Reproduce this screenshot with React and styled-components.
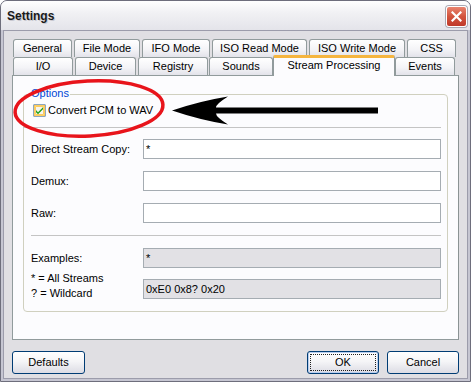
import React from "react";
import styled, { createGlobalStyle } from "styled-components";

const GlobalStyle = createGlobalStyle`
  html, body {
    margin: 0;
    padding: 0;
    background: #ffffff;
  }
  body {
    font-family: "Liberation Sans", Arial, sans-serif;
    font-size: 11px;
    color: #000000;
  }
  * {
    box-sizing: border-box;
  }
`;

const Window = styled.div`
  position: relative;
  width: 471px;
  height: 382px;
  display: flex;
  flex-direction: column;
  border: 1px solid #6e6e7c;
  border-radius: 7px 7px 0 0;
  background: #c6c6d2;
  overflow: hidden;
`;

const TitleBar = styled.div`
  height: 29px;
  flex: none;
  display: flex;
  align-items: center;
  justify-content: space-between;
  padding: 0 3px 0 6px;
  background: linear-gradient(#ffffff, #f1f1f4 40%, #e4e4ea);
`;

const Title = styled.div`
  font-size: 12px;
  font-weight: bold;
  color: #1a1a1a;
  text-shadow: 1px 1px 0 #c8c8d0;
`;

const CloseButton = styled.div`
  width: 21px;
  height: 21px;
  margin-top: 1px;
  border: 1px solid #ffffff;
  border-radius: 3px;
  background: linear-gradient(#e9846f, #d2543d 50%, #c0392a);
  box-shadow: 0 0 0 1px #a9a9b4;
  display: flex;
  align-items: center;
  justify-content: center;
`;

const Body = styled.div`
  flex: 1;
  margin: 0 2px 2px;
  border: 1px solid #9c9cab;
  background: #e0dfe3;
  padding: 8px 8px 0;
  display: flex;
  flex-direction: column;
`;

const TabRow = styled.div`
  display: flex;
  height: 18px;
  padding-left: 1px;
`;

const Tab = styled.div`
  position: relative;
  flex: none;
  width: ${(p) => p.$w}px;
  margin-left: ${(p) => p.$gap || 0}px;
  height: 18px;
  border: 1px solid #919b9c;
  border-bottom: none;
  border-radius: 3px 3px 0 0;
  background: linear-gradient(#ffffff, #f4f4f7 55%, #e3e3ea);
  text-align: center;
  line-height: 17px;
  white-space: nowrap;
`;

const ActiveTab = styled(Tab)`
  z-index: 2;
  height: 21px;
  margin-top: -2px;
  border-top: 3px solid #f5b53f;
  border-radius: 2px 2px 0 0;
  background: #fcfcfe;
  line-height: 14px;
`;

const Page = styled.div`
  height: 265px;
  flex: none;
  border: 1px solid #919b9c;
  border-right-color: #8b9394;
  background: #fcfcfe;
  padding: 18px 10px 0;
`;

const GroupBox = styled.div`
  position: relative;
  height: 218px;
  border: 1px solid #d0d0bf;
  border-radius: 4px;
  padding: 0 6px 0 7px;
  display: flex;
  flex-direction: column;
`;

const Legend = styled.span`
  position: absolute;
  top: -8px;
  left: 6px;
  padding: 0 1px;
  line-height: 13px;
  background: #fcfcfe;
  color: #0046d5;
`;

const CheckRow = styled.label`
  margin-top: 9px;
  height: 13px;
  padding-left: 2px;
  display: flex;
  align-items: center;
  gap: 2px;
  line-height: 13px;
`;

const Separator = styled.div`
  height: 1px;
  flex: none;
  margin-top: ${(p) => p.$top}px;
  margin-left: ${(p) => p.$left || 0}px;
  background: #c4c4c4;
`;

const FieldRow = styled.div`
  height: 20px;
  flex: none;
  margin-top: ${(p) => p.$top}px;
  display: flex;
  align-items: center;
`;

const FieldLabel = styled.div`
  width: 112px;
  flex: none;
  line-height: 15px;
  margin-bottom: ${(p) => p.$shift || 0}px;
`;

const TextBox = styled.div`
  width: 298px;
  height: 20px;
  flex: none;
  border: 1px solid #a5acb2;
  background: ${(p) => (p.$disabled ? "#e2e1e5" : "#ffffff")};
  padding: 2px 2px 0;
  line-height: 14px;
  white-space: nowrap;
`;

const ButtonRow = styled.div`
  margin-top: 11px;
  display: flex;
  align-items: center;
  gap: 8px;
`;

const Spacer = styled.div`
  flex: 1;
`;

const Button = styled.div`
  position: relative;
  width: ${(p) => p.$w}px;
  height: 23px;
  border: 1px solid #003c74;
  border-radius: 3px;
  background: linear-gradient(#ffffff, #f5f5f7 45%, #dcdce4);
  box-shadow: ${(p) => (p.$default ? "inset 0 0 0 1px #b7cdee" : "none")};
  text-align: center;
  line-height: 21px;

  &::after {
    content: "";
    display: ${(p) => (p.$default ? "block" : "none")};
    position: absolute;
    inset: 2px;
    border: 1px dotted #202020;
  }
`;

const Overlay = styled.svg`
  position: absolute;
  left: -1px;
  top: -1px;
  pointer-events: none;
`;

const tabsTop = [
  { label: "General", w: 59, gap: 0 },
  { label: "File Mode", w: 66, gap: 2 },
  { label: "IFO Mode", w: 68, gap: 2 },
  { label: "ISO Read Mode", w: 95, gap: 2 },
  { label: "ISO Write Mode", w: 96, gap: 2 },
  { label: "CSS", w: 49, gap: 2 },
];

const tabsBottom = [
  { label: "I/O", w: 60, gap: 0 },
  { label: "Device", w: 61, gap: 2 },
  { label: "Registry", w: 70, gap: 2 },
  { label: "Sounds", w: 64, gap: 1 },
  { label: "Stream Processing", w: 122, gap: 0, active: true },
  { label: "Events", w: 60, gap: 0 },
];

const CheckIcon = () => (
  <svg width="13" height="13" viewBox="0 0 13 13">
    <rect x="0.5" y="0.5" width="12" height="12" fill="#1c5180" />
    <rect x="1" y="1" width="11" height="11" fill="#f8b636" />
    <rect x="3" y="3" width="7" height="7" fill="#f6f5ee" />
    <rect x="2" y="2" width="9" height="9" fill="none" stroke="#fde28e" strokeWidth="1" />
    <path d="M3 6 L5 8.2 L10 3.2 L10 5.3 L5 10.3 L3 8.2 Z" fill="#21a121" />
  </svg>
);

const CloseIcon = () => (
  <svg width="11" height="11" viewBox="0 0 11 11">
    <path d="M1.5 1.5 L9.5 9.5 M9.5 1.5 L1.5 9.5" stroke="#ffffff" strokeWidth="2.2" strokeLinecap="square" />
  </svg>
);

export default function App() {
  return (
    <>
      <GlobalStyle />
      <Window>
        <TitleBar>
          <Title>Settings</Title>
          <CloseButton>
            <CloseIcon />
          </CloseButton>
        </TitleBar>
        <Body>
          <TabRow>
            {tabsTop.map((t) => (
              <Tab key={t.label} $w={t.w} $gap={t.gap}>
                {t.label}
              </Tab>
            ))}
          </TabRow>
          <TabRow>
            {tabsBottom.map((t) =>
              t.active ? (
                <ActiveTab key={t.label} $w={t.w} $gap={t.gap}>
                  {t.label}
                </ActiveTab>
              ) : (
                <Tab key={t.label} $w={t.w} $gap={t.gap}>
                  {t.label}
                </Tab>
              )
            )}
          </TabRow>
          <Page>
            <GroupBox>
              <Legend>Options</Legend>
              <CheckRow>
                <CheckIcon />
                Convert PCM to WAV
              </CheckRow>
              <Separator $top={10} $left={-8} />
              <FieldRow $top={11}>
                <FieldLabel>Direct Stream Copy:</FieldLabel>
                <TextBox>*</TextBox>
              </FieldRow>
              <FieldRow $top={12}>
                <FieldLabel>Demux:</FieldLabel>
                <TextBox />
              </FieldRow>
              <FieldRow $top={12}>
                <FieldLabel>Raw:</FieldLabel>
                <TextBox />
              </FieldRow>
              <Separator $top={12} />
              <FieldRow $top={12}>
                <FieldLabel>Examples:</FieldLabel>
                <TextBox $disabled>*</TextBox>
              </FieldRow>
              <FieldRow $top={11}>
                <FieldLabel $shift={7}>
                  * = All Streams
                  <br />? = Wildcard
                </FieldLabel>
                <TextBox $disabled>0xE0 0x8? 0x20</TextBox>
              </FieldRow>
            </GroupBox>
          </Page>
          <ButtonRow>
            <Button $w={73}>Defaults</Button>
            <Spacer />
            <Button $w={72} $default>
              OK
            </Button>
            <Button $w={72}>Cancel</Button>
          </ButtonRow>
        </Body>
        <Overlay width="471" height="382" viewBox="0 0 471 382">
          <ellipse
            cx="89"
            cy="108.5"
            rx="74"
            ry="27.5"
            transform="rotate(-3 89 108.5)"
            fill="none"
            stroke="#e8141b"
            strokeWidth="3.5"
          />
          <path
            d="M172 110.5 Q200 101 228 96.5 Q216 104 216 107.5 L378 107.5 L378 113.5 L216 113.5 Q216 117 228 124.5 Q200 120 172 110.5 Z"
            fill="#000000"
          />
        </Overlay>
      </Window>
    </>
  );
}
